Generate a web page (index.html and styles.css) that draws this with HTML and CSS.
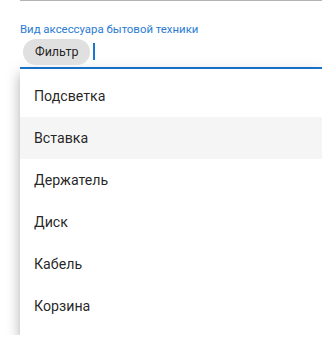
FILE: index.html
```html
<!DOCTYPE html>
<html>

<head>
  <meta charset="utf-8">
  <title>Фильтр аксессуаров</title>
  <link rel="stylesheet" href="styles.css">
</head>

<body>
  <div class="prev-field"></div>

  <div class="field">
    <label class="field-label" for="kind">Вид аксессуара бытовой техники</label>
    <div class="field-input">
      <span class="chip">Фильтр</span>
      <span class="caret"></span>
    </div>
  </div>

  <div class="menu">
    <ul class="menu-list">
      <li class="menu-item">Подсветка</li>
      <li class="menu-item active">Вставка</li>
      <li class="menu-item">Держатель</li>
      <li class="menu-item">Диск</li>
      <li class="menu-item">Кабель</li>
      <li class="menu-item">Корзина</li>
    </ul>
  </div>
</body>

</html>
```

FILE: styles.css
```css
body {
  margin: 0;
  background: #fff;
  font-family: Roboto, "Noto Sans", Arial, sans-serif;
  color: rgba(0, 0, 0, 0.87);
  overflow: hidden;
}

.prev-field {
  margin-left: 20px;
  border-top: 1px solid #b4b4b4;
}

.field {
  margin-left: 20px;
  padding-top: 21px;
  border-bottom: 2px solid #1976d2;
}

.field-label {
  display: block;
  font-size: 11.4px;
  line-height: 14px;
  color: #2a7bd4;
}

.field-input {
  display: flex;
  align-items: center;
  height: 31px;
  padding-left: 3px;
}

.chip {
  display: inline-flex;
  align-items: center;
  height: 26px;
  padding: 0 12px;
  border-radius: 13px;
  background: #e0e0e0;
  font-size: 12.5px;
  color: rgba(0, 0, 0, 0.87);
}

.caret {
  width: 2px;
  height: 17px;
  margin-left: 3px;
  background: #1976d2;
}

.menu {
  margin-left: 20px;
  background: #fff;
  box-shadow: 0 5px 5px -3px rgba(0, 0, 0, 0.2), 0 8px 10px 1px rgba(0, 0, 0, 0.14), 0 3px 14px 2px rgba(0, 0, 0, 0.12);
}

.menu-list {
  list-style: none;
  margin: 0;
  padding: 6px 0 8px;
}

.menu-item {
  display: flex;
  align-items: center;
  height: 42px;
  padding-left: 14px;
  font-size: 14.2px;
}

.menu-item.active {
  background: #f5f5f5;
}
```
